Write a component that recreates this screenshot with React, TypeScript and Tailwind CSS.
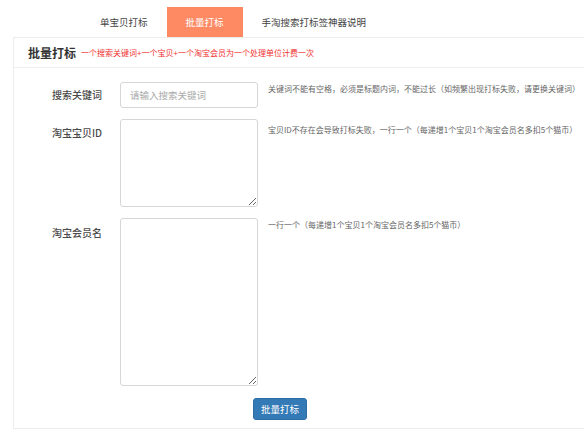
export default function App() {
  const tabs = ["单宝贝打标", "批量打标", "手淘搜索打标签神器说明"];
  const active = 1;

  return (
    <div
      className="w-full h-[441px] bg-white overflow-hidden"
      style={{ fontFamily: '"Noto Sans CJK SC", "Noto Sans", sans-serif' }}
    >
      {/* TABS */}
      <div className="flex pt-[7px] pl-[81px]">
        {tabs.map((t, i) => (
          <div
            key={t}
            className={
              i === active
                ? "h-[30px] px-[19px] flex items-center text-[9.5px] text-white bg-[#fe8a64]"
                : "h-[30px] px-[19px] flex items-center text-[9.5px] text-[#444]"
            }
          >
            {t}
          </div>
        ))}
      </div>

      {/* PANEL */}
      <div className="ml-[13px] h-[392px] border border-r-0 border-[#ececec]">
        <div className="h-[30px] flex items-center pl-[14px] border-b border-[#efefef]">
          <span className="text-[12px] font-bold text-[#333] leading-none">批量打标</span>
          <span className="ml-[5px] text-[8px] text-[#f03030] leading-none">
            一个搜索关键词+一个宝贝+一个淘宝会员为一个处理单位计费一次
          </span>
        </div>

        <div className="pt-[14px] flex flex-col gap-[11px]">
          {/* Keyword */}
          <div className="flex">
            <label className="w-[88px] text-right text-[10px] leading-[12px] pt-[7px] font-medium text-[#4a4a4a]">
              搜索关键词
            </label>
            <input
              className="ml-[18px] w-[138px] h-[26px] border border-[#d6d6d6] rounded-[3px] px-[9px] text-[9.5px] outline-none placeholder:text-[#aaa]"
              placeholder="请输入搜索关键词"
            />
            <p className="ml-[10px] text-[8px] leading-[12px] pt-[1px] text-[#666] whitespace-nowrap">
              关键词不能有空格，必须是标题内词，不能过长（如频繁出现打标失败，请更换关键词）
            </p>
          </div>

          {/* Item ID */}
          <div className="flex">
            <label className="w-[88px] text-right text-[10px] leading-[12px] pt-[8px] font-medium text-[#4a4a4a]">
              淘宝宝贝ID
            </label>
            <textarea className="ml-[18px] w-[138px] h-[88px] border border-[#d6d6d6] rounded-[3px] outline-none" />
            <p className="ml-[10px] text-[8px] leading-[12px] pt-[5px] text-[#666] whitespace-nowrap">
              宝贝ID不存在会导致打标失败，一行一个（每递增1个宝贝1个淘宝会员名多扣5个猫币）
            </p>
          </div>

          {/* Member name */}
          <div className="flex">
            <label className="w-[88px] text-right text-[10px] leading-[12px] pt-[9px] font-medium text-[#4a4a4a]">
              淘宝会员名
            </label>
            <textarea className="ml-[18px] w-[138px] h-[168px] border border-[#d6d6d6] rounded-[3px] outline-none" />
            <p className="ml-[10px] text-[8px] leading-[12px] pt-[1px] text-[#666] whitespace-nowrap">
              一行一个（每递增1个宝贝1个淘宝会员名多扣5个猫币）
            </p>
          </div>

          {/* Submit */}
          <div className="flex pl-[239px] pt-[1px]">
            <button className="w-[54px] h-[22px] rounded-[3px] bg-[#337ab7] text-white text-[9.5px] border border-[#2e6da4]">
              批量打标
            </button>
          </div>
        </div>
      </div>
    </div>
  );
}
